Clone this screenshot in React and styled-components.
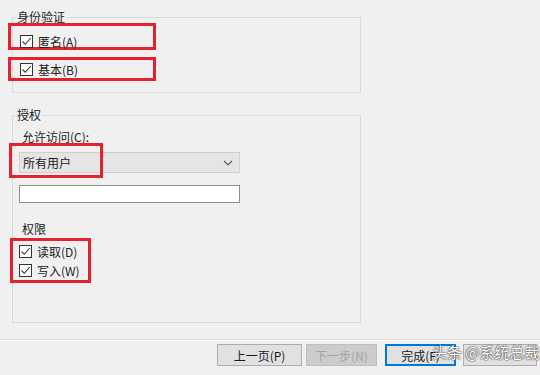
import styled, { createGlobalStyle } from "styled-components";

const Global = createGlobalStyle`
html, body {
    margin: 0;
    padding: 0;
    background: #f0f0f0;
}
body {
    font-family: "Noto Sans CJK SC", "Noto Sans", sans-serif;
    font-size: 12px;
    color: #1a1a1a;
}
`

export default function App() {
    return (
        <Page>
            <Global />
            <Main>
                <Group $mt={9} $pb={11}>
                    <Legend>身份验证</Legend>
                    <Mark $mt={-2} $ml={-5} $w={148} $h={27} $pt={8} $pl={9}>
                        <CheckRow label="匿名(A)" />
                    </Mark>
                    <Mark $mt={7} $ml={-5} $w={148} $h={24} $pt={2} $pl={9}>
                        <CheckRow label="基本(B)" />
                    </Mark>
                </Group>

                <Group $mt={14} $pb={39}>
                    <Legend>授权</Legend>
                    <Label $mt={6}>允许访问(C):</Label>
                    <ComboWrap>
                        <Combo>
                            <span>所有用户</span>
                            <Chevron />
                        </Combo>
                        <Overlay />
                    </ComboWrap>
                    <TextBox />
                    <Label $mt={18}>权限</Label>
                    <Mark $mt={1} $ml={-3} $w={81} $h={45} $pt={1} $pl={6}>
                        <CheckRow label="读取(D)" $h={19} />
                        <CheckRow label="写入(W)" $h={19} />
                    </Mark>
                </Group>
            </Main>

            <Footer>
                <Button $w={85}>上一页(P)</Button>
                <Button $w={71} $ml={4} disabled>下一步(N)</Button>
                <Button $w={71} $ml={8} $primary>完成(F)</Button>
                <Button $w={74} $ml={7}></Button>
                <Watermark>头条 @系统总裁</Watermark>
            </Footer>
        </Page>
    )
}

function CheckRow({ label, $h }) {
    return (
        <Row $h={$h}>
            <Box>
                <svg width="11" height="11" viewBox="0 0 11 11">
                    <path d="M1.5 5.5 L4.3 8.3 L9.8 2" fill="none" stroke="#333" strokeWidth="1.1" />
                </svg>
            </Box>
            <span>{label}</span>
        </Row>
    )
}

function Chevron() {
    return (
        <svg width="10" height="6" viewBox="0 0 10 6">
            <path d="M1 1 L5 5 L9 1" fill="none" stroke="#555" strokeWidth="1.1" />
        </svg>
    )
}

const Page = styled.div`
width: 540px;
height: 375px;
display: flex;
flex-direction: column;
overflow: hidden;
position: relative;
`

const Main = styled.div`
padding-left: 12px;
width: 349px;
`

const Group = styled.fieldset`
margin: ${p => p.$mt}px 0 0 0;
padding: 0 0 ${p => p.$pb}px 0;
border: 1px solid #d9d9d9;
display: flex;
flex-direction: column;
align-items: flex-start;
min-width: 0;
`

const Legend = styled.legend`
margin-left: 3px;
padding: 0 1px;
line-height: 16px;
height: 16px;
color: #222;
`

const Mark = styled.div`
box-sizing: border-box;
margin-top: ${p => p.$mt}px;
margin-left: ${p => p.$ml}px;
width: ${p => p.$w}px;
height: ${p => p.$h}px;
padding: ${p => p.$pt}px 0 0 ${p => p.$pl}px;
border: 3px solid #e2222e;
display: flex;
flex-direction: column;
`

const Row = styled.div`
display: flex;
align-items: center;
gap: 5px;
height: ${p => p.$h || 15}px;
line-height: 15px;
color: #222;
`

const Box = styled.div`
box-sizing: border-box;
width: 13px;
height: 13px;
border: 1px solid #333;
background: #fff;
display: flex;
align-items: center;
justify-content: center;
`

const Label = styled.div`
margin: ${p => p.$mt}px 0 0 9px;
line-height: 16px;
color: #222;
`

const ComboWrap = styled.div`
position: relative;
margin: 7px 0 0 6px;
`

const Combo = styled.div`
box-sizing: border-box;
width: 221px;
height: 21px;
background: #e5e5e5;
border: 1px solid #cfcfcf;
display: flex;
align-items: center;
justify-content: space-between;
padding: 0 6px 0 3px;
`

const Overlay = styled.div`
position: absolute;
top: -9px;
left: -10px;
width: 94px;
height: 35px;
box-sizing: border-box;
border: 3px solid #e2222e;
`

const TextBox = styled.div`
box-sizing: border-box;
margin: 12px 0 0 6px;
width: 221px;
height: 18px;
background: #fff;
border: 1px solid #8f8f8f;
`

const Footer = styled.div`
margin-top: 16px;
border-top: 1px solid #dcdcdc;
box-shadow: inset 0 1px 0 #fff;
display: flex;
justify-content: flex-end;
padding: 4px 3px 0 0;
position: relative;
`

const Button = styled.button`
box-sizing: border-box;
width: ${p => p.$w}px;
height: 22px;
margin-left: ${p => p.$ml || 0}px;
padding: 0;
font-family: inherit;
font-size: 12px;
color: #1a1a1a;
background: #e1e1e1;
border: ${p => p.$primary ? "2px solid #0078d7" : "1px solid #adadad"};

&:disabled {
    color: #a3a3a3;
    background: #cccccc;
    border-color: #bfbfbf;
}
`

const Watermark = styled.div`
position: absolute;
left: 432px;
top: 2px;
font-size: 15px;
line-height: 20px;
color: #fff;
text-shadow: 0 0 1px #444, 0 0 1px #444, 0 0 2px #666;
white-space: nowrap;
`
